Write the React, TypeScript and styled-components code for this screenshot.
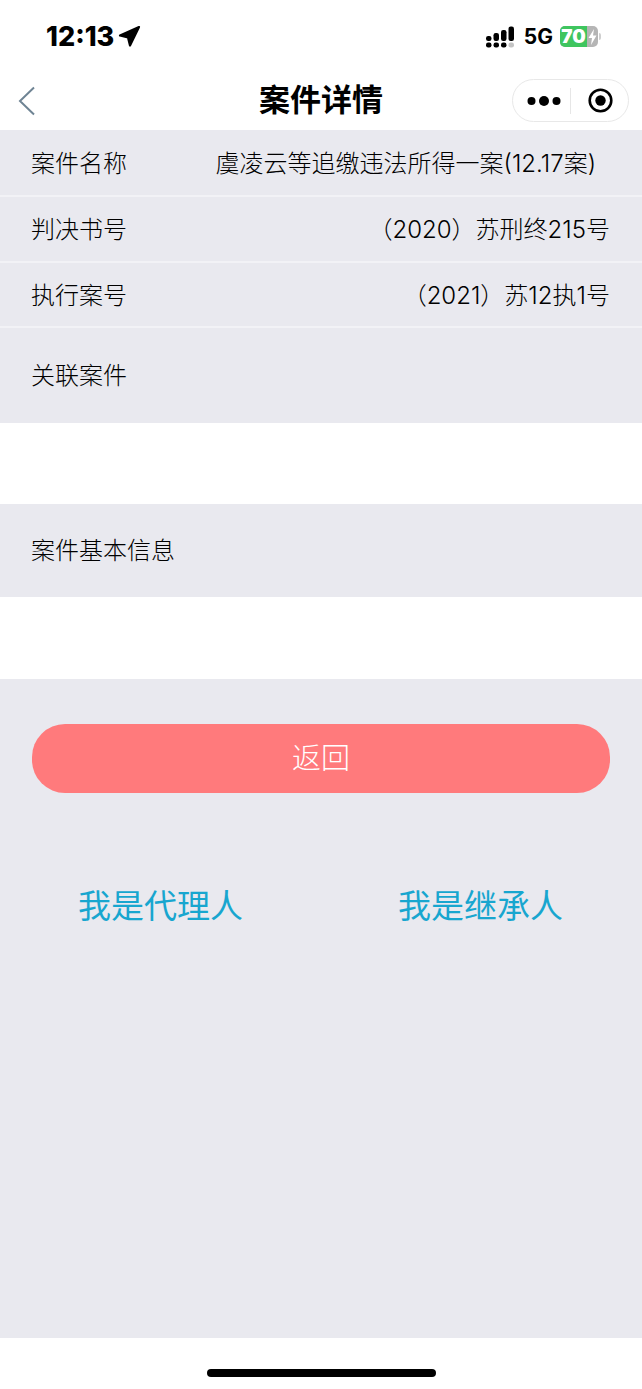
import { FC } from "react";
import styled, { createGlobalStyle } from "styled-components";

const GlobalStyle = createGlobalStyle`
  html, body {
    margin: 0;
    padding: 0;
    background: #fff;
  }
  * {
    box-sizing: border-box;
  }
`;

const FONT = `Inter, "Noto Sans CJK SC", sans-serif`;

const rows = [
  { label: "案件名称", value: "虞凌云等追缴违法所得一案(12.17案)", inset: 14, height: 67 },
  { label: "判决书号", value: "（2020）苏刑终215号", inset: 0, height: 66 },
  { label: "执行案号", value: "（2021）苏12执1号", inset: 0, height: 65 },
];

const App: FC = () => (
  <Page>
    <GlobalStyle />
    <StatusBar>
      <TimeGroup>
        <Time>12:13</Time>
        <svg width="23" height="23" viewBox="0 0 23 23">
          <path
            d="M21 2 L2 10.5 L10 12.5 L12 20.5 Z"
            fill="#000"
            stroke="#000"
            strokeWidth="2.2"
            strokeLinejoin="round"
          />
        </svg>
      </TimeGroup>
      <StatusRight>
        <svg width="32" height="22" viewBox="0 0 32 22">
          <g fill="#000">
            <rect x="1" y="10" width="5.5" height="5" rx="2.2" />
            <rect x="1" y="16.5" width="5.5" height="5" rx="2.2" />
            <rect x="8.5" y="7" width="5.5" height="8" rx="2.2" />
            <rect x="8.5" y="16.5" width="5.5" height="5" rx="2.2" />
            <rect x="16" y="4" width="5.5" height="11" rx="2.2" />
            <rect x="16" y="16.5" width="5.5" height="5" rx="2.2" />
            <rect x="23.5" y="0.5" width="5.5" height="14.5" rx="2.2" />
          </g>
          <rect x="23.5" y="16.5" width="5.5" height="5" rx="2.2" fill="#c4c4c4" />
        </svg>
        <Network>5G</Network>
        <Battery>
          <BatteryFill>70</BatteryFill>
          <BatteryBolt>
            <svg width="9" height="16" viewBox="0 0 9 16">
              <path d="M6 0 L0.5 9 H4 L3 16 L8.5 6.5 H5 Z" fill="#fff" />
            </svg>
          </BatteryBolt>
          <BatteryCap />
        </Battery>
      </StatusRight>
    </StatusBar>
    <NavBar>
      <BackIcon width="18" height="30" viewBox="0 0 18 30">
        <path d="M16 1.5 L2 15 L16 28.5" fill="none" stroke="#6f8494" strokeWidth="2" />
      </BackIcon>
      <Title>案件详情</Title>
      <Capsule>
        <svg width="34" height="12" viewBox="0 0 34 12">
          <circle cx="4.5" cy="6" r="4" fill="#000" />
          <circle cx="17" cy="6" r="5" fill="#000" />
          <circle cx="29.5" cy="6" r="4" fill="#000" />
        </svg>
        <CapsuleDivider />
        <svg width="25" height="25" viewBox="0 0 25 25">
          <circle cx="12.5" cy="12.5" r="10.8" fill="none" stroke="#000" strokeWidth="2.6" />
          <circle cx="12.5" cy="12.5" r="5.2" fill="#000" />
        </svg>
      </Capsule>
    </NavBar>
    <Main>
      <InfoList>
        {rows.map((row) => (
          <InfoRow key={row.label} $height={row.height}>
            <RowLabel>{row.label}</RowLabel>
            <RowValue $inset={row.inset}>{row.value}</RowValue>
          </InfoRow>
        ))}
      </InfoList>
      <SectionRow $height={95}>
        <RowLabel>关联案件</RowLabel>
      </SectionRow>
      <WhiteGap $height={81} />
      <SectionRow $height={93}>
        <RowLabel>案件基本信息</RowLabel>
      </SectionRow>
      <WhiteGap $height={82} />
      <Actions>
        <BackButton>返回</BackButton>
        <LinkRow>
          <RoleLink>我是代理人</RoleLink>
          <RoleLink>我是继承人</RoleLink>
        </LinkRow>
      </Actions>
    </Main>
    <HomeArea>
      <HomeBar />
    </HomeArea>
  </Page>
);

const Page = styled.div`
  width: 642px;
  height: 1389px;
  display: flex;
  flex-direction: column;
  overflow: hidden;
  background: #fff;
  color: #000;
  font-family: ${FONT};
`;

const StatusBar = styled.div`
  height: 73px;
  display: flex;
  align-items: center;
  justify-content: space-between;
  padding: 0 44px 0 46px;
`;

const TimeGroup = styled.div`
  display: flex;
  align-items: center;
  gap: 4px;
`;

const Time = styled.span`
  font-size: 27px;
  font-weight: 800;
`;

const StatusRight = styled.div`
  display: flex;
  align-items: center;
  gap: 7px;
`;

const Network = styled.span`
  font-size: 21px;
  font-weight: 700;
`;

const Battery = styled.div`
  position: relative;
  width: 38px;
  height: 21px;
  display: flex;
  border-radius: 5px;
  background: #b5b5b5;
`;

const BatteryFill = styled.div`
  width: 27px;
  border-radius: 5px 0 0 5px;
  background: #3fc55f;
  color: #fff;
  font-size: 19px;
  font-weight: 900;
  line-height: 21px;
  text-align: center;
`;

const BatteryBolt = styled.div`
  flex: 1;
  display: flex;
  align-items: center;
  justify-content: center;
`;

const BatteryCap = styled.div`
  position: absolute;
  right: -3px;
  top: 7px;
  width: 2px;
  height: 7px;
  border-radius: 0 2px 2px 0;
  background: #cfcfcf;
`;

const NavBar = styled.div`
  position: relative;
  height: 57px;
  display: flex;
  align-items: center;
  justify-content: center;
  padding-bottom: 3px;
`;

const BackIcon = styled.svg`
  position: absolute;
  left: 18px;
  top: 13px;
`;

const Title = styled.h1`
  margin: 0;
  font-size: 31px;
  line-height: 40px;
  font-weight: 700;
`;

const Capsule = styled.div`
  position: absolute;
  right: 13px;
  top: 6px;
  width: 117px;
  height: 43px;
  display: flex;
  align-items: center;
  padding-left: 14px;
  border: 1px solid #e8e8e8;
  border-radius: 22px;
  background: #fff;
`;

const CapsuleDivider = styled.div`
  width: 1px;
  height: 26px;
  margin: 0 17px 0 9px;
  background: #e6e6e6;
`;

const Main = styled.div`
  flex: 1;
  display: flex;
  flex-direction: column;
  background: #e9e9ef;
`;

const InfoList = styled.div`
  display: flex;
  flex-direction: column;
`;

const InfoRow = styled.div<{ $height: number }>`
  height: ${(p) => p.$height}px;
  display: flex;
  align-items: center;
  justify-content: space-between;
  padding: 0 32px 3px 31px;
  border-bottom: 2px solid #f2f2f6;
  font-size: 24px;
`;

const RowLabel = styled.span`
  font-size: 24px;
  font-weight: 300;
  color: #000;
`;

const RowValue = styled.span<{ $inset: number }>`
  margin-right: ${(p) => p.$inset}px;
  font-weight: 300;
  color: #000;
`;

const SectionRow = styled.div<{ $height: number }>`
  height: ${(p) => p.$height}px;
  display: flex;
  align-items: center;
  padding: 0 31px 4px;
`;

const WhiteGap = styled.div<{ $height: number }>`
  height: ${(p) => p.$height}px;
  background: #fff;
`;

const Actions = styled.div`
  flex: 1;
  display: flex;
  flex-direction: column;
  padding: 45px 32px 0;
`;

const BackButton = styled.button`
  height: 69px;
  padding: 0 0 5px;
  border: 0;
  border-radius: 33px;
  background: #ff7a7c;
  color: #fff;
  font-family: ${FONT};
  font-size: 29px;
  font-weight: 300;
`;

const LinkRow = styled.div`
  display: flex;
  justify-content: space-between;
  margin-top: 91px;
  padding: 0 47px 0 46px;
`;

const RoleLink = styled.span`
  font-size: 33px;
  font-weight: 400;
  line-height: 44px;
  color: #18a6cf;
`;

const HomeArea = styled.div`
  height: 51px;
  display: flex;
  justify-content: center;
  padding-top: 31px;
`;

const HomeBar = styled.div`
  width: 229px;
  height: 8px;
  border-radius: 4px;
  background: #000;
`;

export default App;
